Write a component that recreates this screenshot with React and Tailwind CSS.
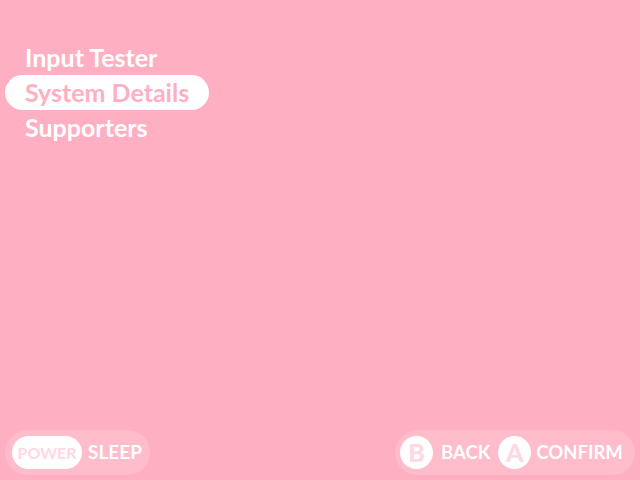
const items = ["Input Tester", "System Details", "Supporters"];

const Hint = ({ label, text, gap }) => (
  <div className={"flex items-center " + gap}>
    <span className="h-[33px] w-[33px] rounded-full bg-white flex items-center justify-center text-[#ffd8e2] text-[25px] font-black">
      {label}
    </span>
    <span className="text-white text-[18.5px] font-bold">{text}</span>
  </div>
);

const App = () => {
  return (
    <div
      className="w-[640px] h-[480px] bg-[#ffafc2] flex flex-col justify-between overflow-hidden"
      style={{ fontFamily: 'Lato, "Noto Sans", sans-serif' }}
    >
      <div className="pt-[40px] pl-[5px] flex flex-col">
        {items.map((item, i) => (
          <div
            key={item}
            className={
              "h-[35px] pl-[20px] pr-[20px] w-max rounded-full flex items-center text-[25px] font-bold leading-none " +
              (i === 1 ? "bg-white text-[#ffafc2]" : "text-white")
            }
          >
            {item}
          </div>
        ))}
      </div>
      <div className="flex justify-between items-end px-[5px] pb-[5px]">
        <div className="h-[45px] w-[145px] rounded-full bg-[#ffbccb] flex items-center pl-[7px] gap-[6px]">
          <span className="h-[33px] w-[70px] justify-center rounded-full bg-white flex items-center text-[#ffd8e2] text-[16px] font-bold">
            POWER
          </span>
          <span className="text-white text-[19px] font-bold">SLEEP</span>
        </div>
        <div className="h-[45px] w-[240px] rounded-full bg-[#ffbccb] flex items-center pl-[5px] gap-[8px]">
          <Hint label="B" text="BACK" gap="gap-[8px]" />
          <Hint label="A" text="CONFIRM" gap="gap-[5px]" />
        </div>
      </div>
    </div>
  );
};

export default App;
